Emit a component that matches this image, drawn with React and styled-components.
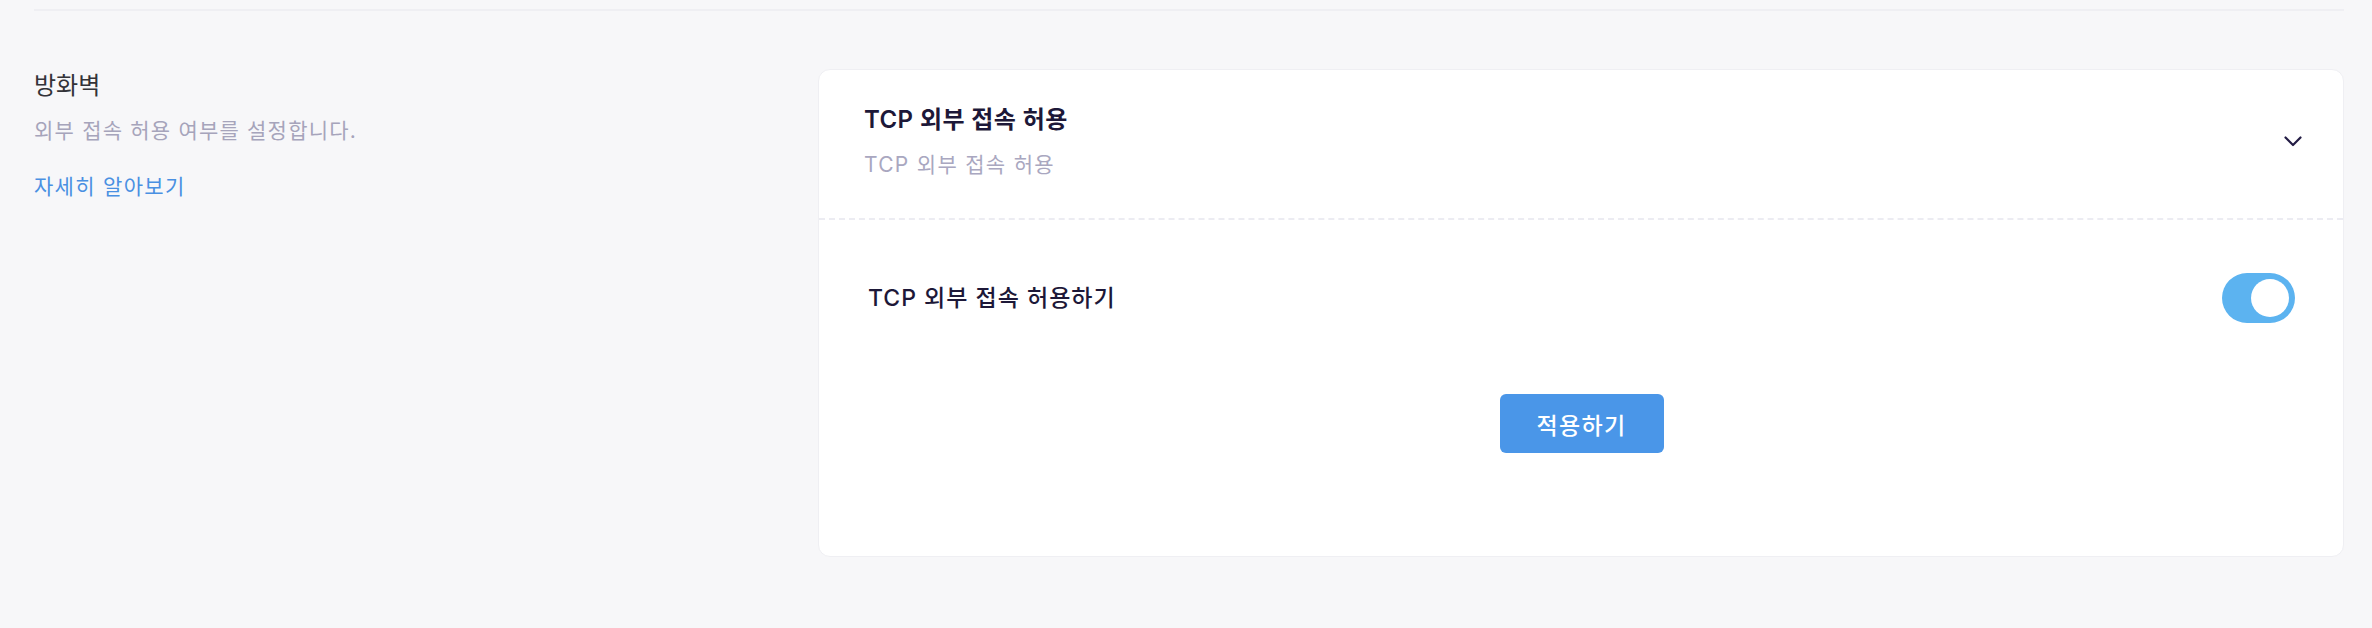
import styled, { createGlobalStyle } from "styled-components";

const GlobalStyle = createGlobalStyle`
  html, body {
    margin: 0;
    padding: 0;
    background: #f7f7f9;
  }
  body {
    font-family: Inter, "Noto Sans CJK KR", sans-serif;
    -webkit-font-smoothing: antialiased;
  }
  * {
    box-sizing: border-box;
  }
`;

const Page = styled.div`
  min-height: 628px;
  padding: 9px 28px 0 34px;
  background: #f7f7f9;
`;

const TopRule = styled.hr`
  margin: 0;
  border: 0;
  border-top: 2px solid #efeff3;
`;

const Section = styled.section`
  display: grid;
  grid-template-columns: 784px 1fr;
  margin-top: 58px;
`;

const Info = styled.div`
  display: flex;
  flex-direction: column;
  align-items: flex-start;
`;

const InfoTitle = styled.h2`
  margin: 0;
  font-size: 24px;
  line-height: 34px;
  font-weight: 400;
  color: #333338;
`;

const InfoDesc = styled.p`
  margin: 13px 0 0;
  font-size: 21px;
  line-height: 30px;
  letter-spacing: 1.2px;
  color: #a6a4bb;
`;

const LearnMore = styled.a`
  margin-top: 26px;
  font-size: 21px;
  line-height: 30px;
  letter-spacing: 1.3px;
  color: #4a90e2;
  text-decoration: none;
  cursor: pointer;
`;

const Card = styled.div`
  background: #ffffff;
  border: 1px solid #efeff3;
  border-radius: 12px;
`;

const CardHeader = styled.div`
  display: flex;
  align-items: center;
  justify-content: space-between;
  padding: 33px 41px 38px 45px;
  border-bottom: 2px dashed #ececf2;
`;

const HeaderTitle = styled.h3`
  margin: 0;
  font-size: 24px;
  line-height: 34px;
  font-weight: 600;
  letter-spacing: 0.4px;
  color: #1d1838;
`;

const HeaderSub = styled.p`
  margin: 13px 0 0;
  font-size: 21px;
  line-height: 30px;
  letter-spacing: 1.3px;
  color: #a9a7c0;
`;

const Chevron = styled.svg`
  width: 18px;
  height: 11px;
  flex-shrink: 0;
`;

const CardBody = styled.div`
  display: flex;
  flex-direction: column;
  padding: 53px 48px 103px 49px;
`;

const OptionRow = styled.div`
  display: flex;
  align-items: center;
  justify-content: space-between;
  height: 50px;
`;

const OptionLabel = styled.span`
  font-size: 23px;
  line-height: 30px;
  font-weight: 500;
  letter-spacing: 1px;
  color: #1d1838;
`;

const Toggle = styled.button`
  position: relative;
  width: 73px;
  height: 50px;
  padding: 0;
  border: 0;
  border-radius: 25px;
  background: ${(p) => (p.$on ? "#5cb3f0" : "#d8d8e0")};
  cursor: pointer;

  &::after {
    content: "";
    position: absolute;
    top: 6px;
    left: ${(p) => (p.$on ? "29px" : "6px")};
    width: 38px;
    height: 38px;
    border-radius: 50%;
    background: #ffffff;
  }
`;

const ApplyButton = styled.button`
  align-self: center;
  margin-top: 71px;
  width: 164px;
  height: 59px;
  border: 0;
  border-radius: 6px;
  background: #4a96e8;
  color: #ffffff;
  font-family: inherit;
  font-size: 23px;
  font-weight: 500;
  letter-spacing: 1.4px;
  cursor: pointer;
`;

export default function App() {
  return (
    <>
      <GlobalStyle />
      <Page>
        <TopRule />
        <Section>
          <Info>
            <InfoTitle>방화벽</InfoTitle>
            <InfoDesc>외부 접속 허용 여부를 설정합니다.</InfoDesc>
            <LearnMore>자세히 알아보기</LearnMore>
          </Info>
          <Card>
            <CardHeader>
              <div>
                <HeaderTitle>TCP 외부 접속 허용</HeaderTitle>
                <HeaderSub>TCP 외부 접속 허용</HeaderSub>
              </div>
              <Chevron viewBox="0 0 18 11" fill="none">
                <polyline
                  points="1.5,1.5 9,9 16.5,1.5"
                  stroke="#231c45"
                  strokeWidth="2.2"
                  strokeLinecap="round"
                  strokeLinejoin="round"
                />
              </Chevron>
            </CardHeader>
            <CardBody>
              <OptionRow>
                <OptionLabel>TCP 외부 접속 허용하기</OptionLabel>
                <Toggle $on aria-label="TCP 외부 접속 허용하기" />
              </OptionRow>
              <ApplyButton>적용하기</ApplyButton>
            </CardBody>
          </Card>
        </Section>
      </Page>
    </>
  );
}
